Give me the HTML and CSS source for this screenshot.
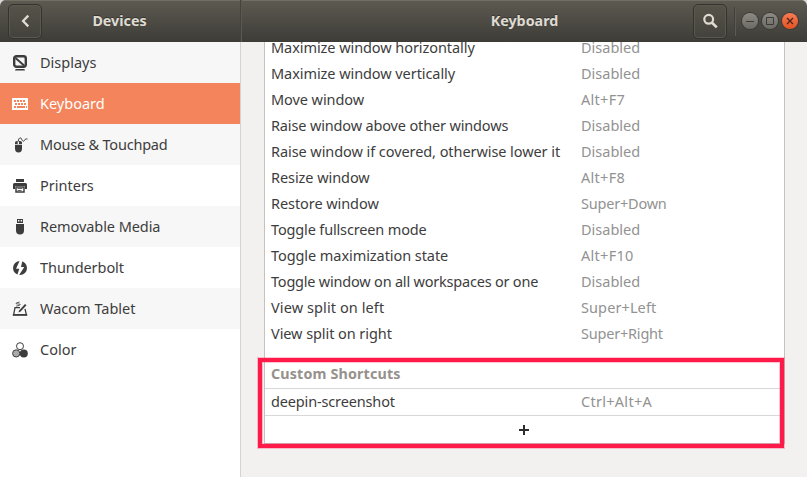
FILE: index.html
```html
<!DOCTYPE html>
<html lang="en">
<head>
<meta charset="utf-8">
<title>Keyboard</title>
<link rel="stylesheet" href="styles.css">
</head>
<body>
<div class="window">
  <header class="titlebar">
    <div class="title-left">
      <button class="btn" aria-label="Back"><svg width="16" height="16" viewBox="0 0 16 16"><path d="M11.300 2.600 6.100 8l5.200 5.400" fill="none" stroke="#dfdbd2" stroke-width="2.3"/></svg></button>
      <h1>Devices</h1>
    </div>
    <div class="title-right">
      <h1>Keyboard</h1>
      <button class="btn" aria-label="Search"><svg width="16" height="16" viewBox="0 0 16 16"><circle cx="6.7" cy="6.3" r="4.4" fill="none" stroke="#dfdbd2" stroke-width="2.2"/><path d="m9.8 9.5 5 4.9" stroke="#dfdbd2" stroke-width="2.6"/></svg></button>
      <span class="sep"></span>
      <span class="wm"><svg width="16" height="16" viewBox="0 0 16 16"><path d="M4 8.5h8" stroke="#3c3b37"/></svg></span>
      <span class="wm"><svg width="16" height="16" viewBox="0 0 16 16"><path d="M4.500 4.500h7v7h-7z" fill="none" stroke="#3c3b37"/></svg></span>
      <span class="wm close"><svg width="16" height="16" viewBox="0 0 16 16"><path d="m5 5 6 6m0-6-6 6" stroke="#4b2418" stroke-width="1.3"/></svg></span>
    </div>
  </header>
  <div class="body">
    <nav class="sidebar">
      <a class="item"><svg width="16" height="16" viewBox="0 0 16 16"><rect x="2.200" y="1.200" width="11.600" height="10.600" rx="2.200" fill="none" stroke="#3d3d3d" stroke-width="2.400"/><path d="m3.500 3 8.600 7.500" stroke="#3d3d3d" stroke-width="1.900"/><path d="M3.800 14h8.400l1 1.600H2.800z" fill="#3d3d3d"/></svg><span>Displays</span></a>
      <a class="item selected"><svg width="16" height="16" viewBox="0 0 16 16"><rect y="2" width="16" height="12" rx=".6" fill="#fff"/><path d="M2 5h12M3 8h12M2 11h13" fill="none" stroke="#f4845b" stroke-width="2" stroke-dasharray="2 1"/><path d="M5 11h6" stroke="#f4845b" stroke-width="2"/></svg><span>Keyboard</span></a>
      <a class="item"><svg width="16" height="16" viewBox="0 0 16 16"><path d="M3 7.800h7v3.700a3.500 4 0 0 1-7 0zM3 7V5.500Q3 4 5 4h.7v3zM7 4h1q2 0 2 1.500V7H7z" fill="#3d3d3d"/><path d="M6.300 4.500C6.300 1 8.700-.3 9.600 2s2 3 3 1.200S14.300 2 15.500 2" fill="none" stroke="#3d3d3d"/></svg><span class="tight-3">Mouse &amp; Touchpad</span></a>
      <a class="item"><svg width="16" height="16" viewBox="0 0 16 16"><path d="M4 1h8v3H4zM2.500 5h11Q15 5 15 6.500V11h-2V8H3v3H1V6.500Q1 5 2.500 5z" fill="#3d3d3d"/><path d="M4 9h8v5H4z" fill="none" stroke="#3d3d3d" stroke-width="1.500"/><path d="M5.500 10.500h5M5.500 12.500h4" stroke="#3d3d3d" stroke-width=".8"/></svg><span>Printers</span></a>
      <a class="item"><svg width="16" height="16" viewBox="0 0 16 16"><path d="M5 0h6v4H5zM4 5h8v6.500a4 4 0 0 1-8 0z" fill="#3d3d3d"/><path d="M6 1h1.400v1.600H6zM8.700 1h1.400v1.600H8.700z" fill="#fff"/></svg><span class="tight-1">Removable Media</span></a>
      <a class="item"><svg width="16" height="16" viewBox="0 0 16 16"><circle cx="8" cy="8" r="7" fill="#3d3d3d"/><path d="M8 0 4 8.800h3.300L5 16h1.500L12.300 7H9L10.500.2z" fill="#fff"/></svg><span class="tight-1">Thunderbolt</span></a>
      <a class="item"><svg width="16" height="16" viewBox="0 0 16 16"><path d="M8 6.700H3L1.600 13.800h12.800L13 7.800" fill="none" stroke="#3d3d3d" stroke-width="1.300"/><path d="M.8 13h14.400v1.700H.8z" fill="#3d3d3d"/><path d="m6.300 11.500 1-2.300L13 3l1.500 1.300-5.800 6.200z" fill="#3d3d3d"/><path d="M7.500 1.100C3 2 3 2.800 6.500 3S8 4.500 4.200 5.100" fill="none" stroke="#3d3d3d" stroke-width=".9"/></svg><span>Wacom Tablet</span></a>
      <a class="item"><svg width="16" height="16" viewBox="0 0 16 16"><circle cx="8" cy="4.200" r="3.500" fill="#fff" stroke="#3d3d3d"/><circle cx="4.200" cy="11.400" r="3.600" fill="#aaa" stroke="#3d3d3d"/><circle cx="11.800" cy="11.400" r="4" fill="#3d3d3d"/></svg><span>Color</span></a>
    </nav>
    <main>
      <div class="list">
        <div class="row"><span class="tight-1">Maximize window horizontally</span><span>Disabled</span></div>
        <div class="row"><span class="tight-1">Maximize window vertically</span><span>Disabled</span></div>
        <div class="row"><span class="tight-1">Move window</span><span class="wide-2">Alt+F7</span></div>
        <div class="row"><span class="tight-2">Raise window above other windows</span><span>Disabled</span></div>
        <div class="row"><span class="tight-1">Raise window if covered, otherwise lower it</span><span>Disabled</span></div>
        <div class="row"><span class="tight-1">Resize window</span><span class="wide-2">Alt+F8</span></div>
        <div class="row"><span class="tight-1">Restore window</span><span class="tight-3">Super+Down</span></div>
        <div class="row"><span class="tight-2">Toggle fullscreen mode</span><span>Disabled</span></div>
        <div class="row"><span class="tight-1">Toggle maximization state</span><span class="wide-2">Alt+F10</span></div>
        <div class="row"><span class="tight-3">Toggle window on all workspaces or one</span><span>Disabled</span></div>
        <div class="row"><span class="wide-1">View split on left</span><span class="wide-1">Super+Left</span></div>
        <div class="row"><span class="tight-1">View split on right</span><span class="tight-3">Super+Right</span></div>
        <h2>Custom Shortcuts</h2>
        <div class="row custom"><span class="tight-2">deepin-screenshot</span><span class="wide-2">Ctrl+Alt+A</span></div>
        <div class="add"><svg width="10" height="10" viewBox="0 0 10 10"><path d="M0 5h10M5 0v10" stroke="#2d2d2d" stroke-width="2"/></svg></div>
      </div>
      <div class="highlight"></div>
    </main>
  </div>
</div>
</body>
</html>
```

FILE: styles.css
```css
* { box-sizing: border-box; }
body { margin: 0; background: #d8d8d8; font: 14.5px "Noto Sans", sans-serif; color: #3d3d3d; }
.window { width: 807px; height: 477px; overflow: hidden; border-radius: 6px 6px 0 0; background: #f2f1f0; }
.titlebar { height: 42px; display: flex; background: linear-gradient(#5d5a51, #3d3c37); box-shadow: inset 0 1px #716e65; }
.title-left, .title-right { display: flex; align-items: center; }
.title-left { width: 241px; padding-left: 8px; border-right: 1px solid #45433d; }
.title-right { flex: 1; padding-right: 9px; border-left: 1px solid #5a5850; }
h1 { flex: 1; margin: 0; padding-bottom: 2px; text-align: center; font-size: 14.3px; font-weight: 700; color: #dfdbd2; text-shadow: 0 -1px #35342f; }
.title-left h1 { padding-right: 43px; }
.title-right h1 { padding-left: 114px; }
.btn { width: 34px; height: 35px; margin: 0; padding: 0; display: grid; place-items: center; border: 1px solid #34332e; border-radius: 5px; background: linear-gradient(#565349, #43423c); box-shadow: inset 0 0 0 1px #5b594f; }
.sep { width: 2px; height: 29px; margin: 0 6px 0 7px; background: #403f39; border-right: 1px solid #5d5b53; }
.wm { width: 16px; height: 16px; margin-left: 4px; border-radius: 50%; background: linear-gradient(#8c8a83, #6c6a64); box-shadow: 0 0 0 1px #3b3a35; }
.wm svg { display: block; }
.sep + .wm { margin-left: 0; }
.wm.close { background: linear-gradient(#f77b54, #e25222); }
.body { height: 435px; display: flex; }
.sidebar { width: 241px; background: #fff; border-right: 1px solid #d5d2cf; }
.item { height: 41px; padding-left: 12px; display: flex; align-items: center; gap: 12px; }
.item span { padding-bottom: 2px; }
.item:nth-child(odd) { background: #f7f7f7; }
.item.selected { background: #f4845b; color: #fff; }
main { position: relative; flex: 1; overflow: hidden; padding: 0 22px 0 23px; }
.list { height: 409px; margin-top: -7px; background: #fff; border: solid #c6c2be; border-width: 0 1px 1px; }
.row { height: 26px; padding: 0 0 2px 6px; display: grid; grid-template-columns: 310px 1fr; align-items: center; white-space: nowrap; }
.row span:last-child { color: #929292; }
.tight-1 { letter-spacing: -.07px; }
.tight-2 { letter-spacing: -.15px; }
.tight-3 { letter-spacing: -.21px; }
.wide-1 { letter-spacing: .1px; }
.wide-2 { letter-spacing: .28px; }
h2 { height: 42px; margin: 0; padding: 16px 0 0 6px; font-size: 14.3px; line-height: 22px; letter-spacing: .15px; color: #96918c; border-bottom: 1px solid #d8d8d8; }
.row.custom { height: 27px; border-bottom: 1px solid #d8d8d8; }
.add { height: 27px; padding-right: 2px; display: grid; place-items: center; }
.add svg { display: block; }
.highlight { position: absolute; left: 17px; top: 316px; width: 526px; height: 90px; border: 4px solid #ff1b49; box-shadow: 0 0 0 1px #ff1b4940, inset 0 0 0 1px #ff1b4940; }
```
